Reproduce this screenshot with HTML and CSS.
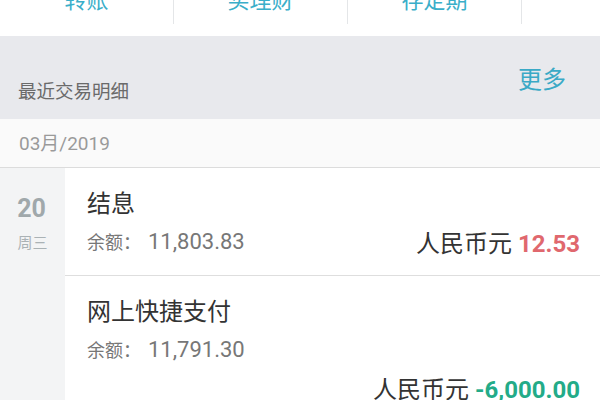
FILE: index.html
```html
<!DOCTYPE html>
<html lang="zh-CN">
<head>
<meta charset="utf-8">
<link rel="stylesheet" href="styles.css">
</head>
<body>
<div class="tabs">
  <div class="tab"><span class="tab-label">转账</span></div>
  <div class="tab"><span class="tab-label">买理财</span></div>
  <div class="tab"><span class="tab-label">存定期</span></div>
  <div class="tab"><span class="tab-label"></span></div>
</div>
<div class="section-head">
  <span class="section-title">最近交易明细</span>
  <span class="more">更多</span>
</div>
<div class="month">03月/2019</div>
<div class="day">
  <div class="day-side">
    <div class="day-num">20</div>
    <div class="day-week">周三</div>
  </div>
  <div class="day-list">
    <div class="txn">
      <div class="txn-title">结息</div>
      <div class="txn-line">
        <span class="txn-balance">余额：<span class="num">11,803.83</span></span>
        <span class="txn-amount">人民币元 <b class="pos">12.53</b></span>
      </div>
    </div>
    <div class="txn">
      <div class="txn-title">网上快捷支付</div>
      <div class="txn-line">
        <span class="txn-balance">余额：<span class="num">11,791.30</span></span>
      </div>
      <div class="txn-line end">
        <span class="txn-amount">人民币元 <b class="neg">-6,000.00</b></span>
      </div>
    </div>
  </div>
</div>
</body>
</html>
```

FILE: styles.css
```css
html, body {
  margin: 0;
  padding: 0;
}
body {
  width: 600px;
  height: 400px;
  overflow: hidden;
  background: #e8e9ed;
  font-family: Roboto, "Noto Sans CJK SC", sans-serif;
}
.tabs {
  display: flex;
  background: #fff;
  height: 36px;
  width: 600px;
  overflow: hidden;
}
.tab {
  flex: 0 0 174px;
  height: 24px;
  border-right: 1px solid #e4e6e8;
  box-sizing: border-box;
  display: flex;
  justify-content: center;
  align-items: flex-start;
}
.tab-label {
  font-size: 22px;
  line-height: 22px;
  color: #3aaec9;
  margin-top: -10px;
}
.section-head {
  height: 83px;
  display: flex;
  justify-content: space-between;
  align-items: flex-start;
  padding: 0 34px 0 18px;
  box-sizing: border-box;
}
.section-title {
  font-size: 18.5px;
  line-height: 24px;
  color: #6a6a6a;
  margin-top: 44px;
}
.more {
  font-size: 24px;
  line-height: 28px;
  color: #3aa9c6;
  margin-top: 30px;
}
.month {
  height: 49px;
  box-sizing: border-box;
  background: #fafafa;
  border-bottom: 1px solid #dcdcdc;
  padding-left: 19px;
  font-size: 19px;
  line-height: 50px;
  color: #9a9a9a;
}
.day {
  display: flex;
  background: #fff;
}
.day-side {
  flex: 0 0 65px;
  background: #f3f4f5;
  padding-top: 26px;
  text-align: center;
  min-height: 300px;
}
.day-num {
  font-size: 25px;
  line-height: 30px;
  font-weight: 700;
  color: #a0a8ab;
  padding-right: 2px;
}
.day-week {
  font-size: 15px;
  line-height: 20px;
  margin-top: 9px;
  color: #aab2b5;
}
.day-list {
  flex: 1;
  background: #fff;
}
.txn {
  padding: 18px 20px 15px 22px;
  border-bottom: 1px solid #dedede;
}
.txn-title {
  font-size: 24px;
  line-height: 36px;
  color: #333;
}
.txn-line {
  display: flex;
  justify-content: space-between;
  align-items: center;
  height: 38px;
}
.txn-line.end {
  justify-content: flex-end;
}
.txn-balance {
  font-size: 18px;
  color: #777;
}
.txn-balance .num {
  font-size: 22px;
  margin-left: 7px;
}
.txn-amount {
  font-size: 24px;
  color: #333;
}
.txn-amount b {
  font-weight: 700;
}
.pos {
  color: #e0686e;
}
.neg {
  color: #23ab88;
}
```
